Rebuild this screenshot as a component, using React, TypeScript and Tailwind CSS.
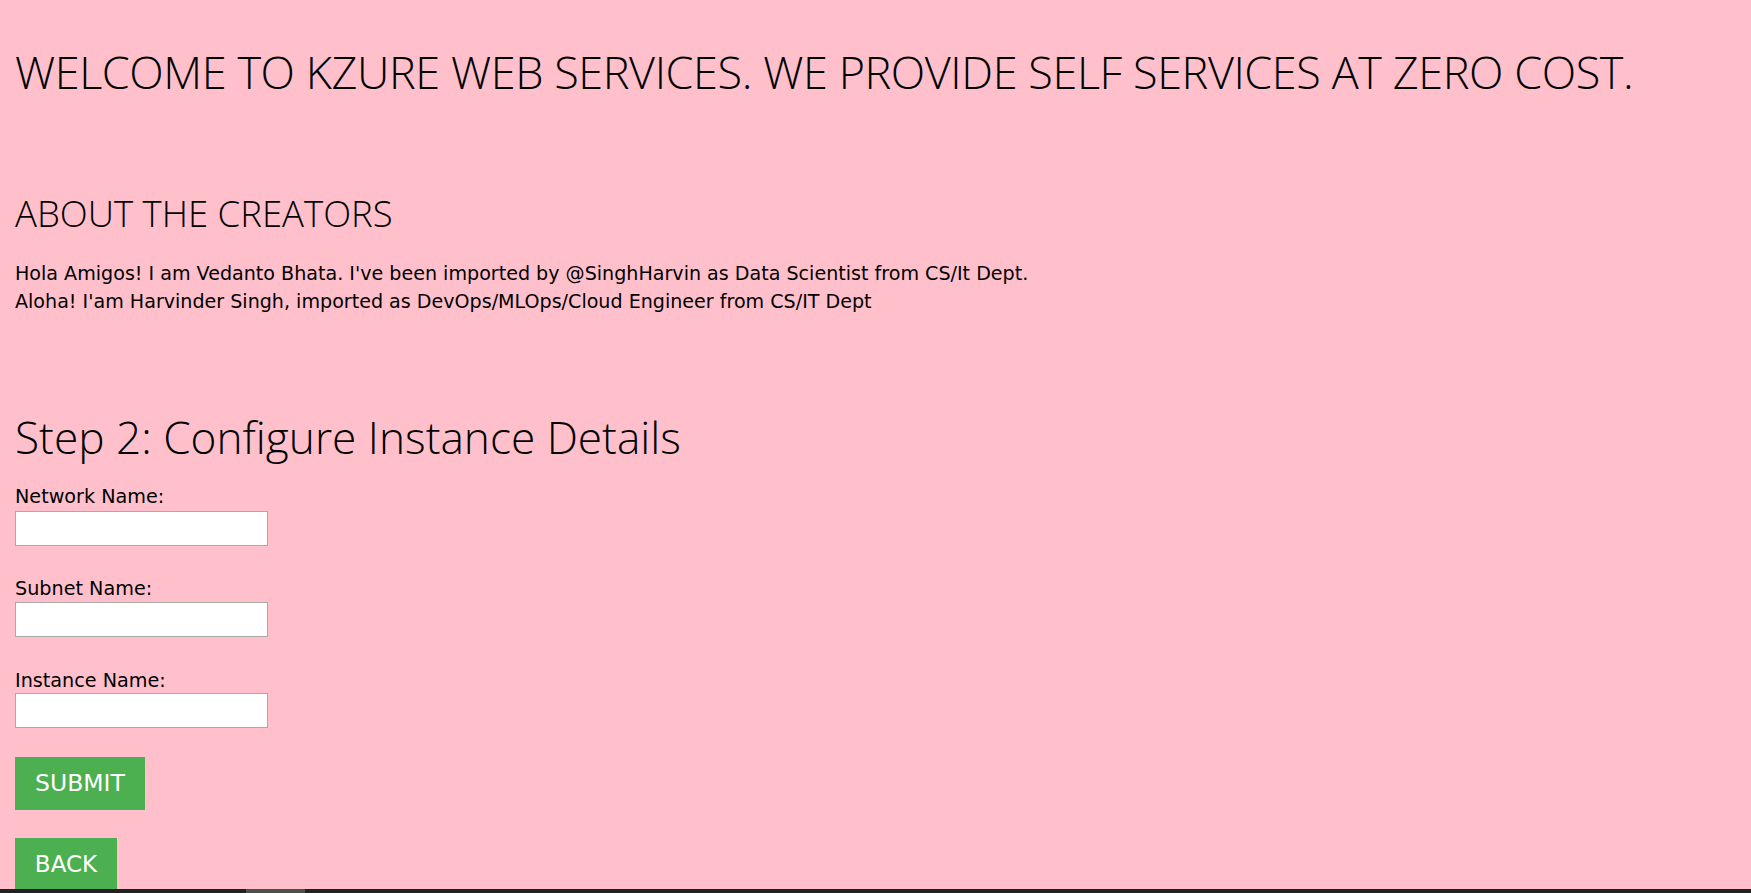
import React from "react";

const heading = { fontFamily: '"Open Sans", "Noto Sans", sans-serif' };
const body = { fontFamily: '"DejaVu Sans", Verdana, sans-serif' };

function Field({ label, labelMt, inputMt }: { label: string; labelMt: string; inputMt: string }) {
  return (
    <div className="flex flex-col items-start">
      <label className={`${labelMt} block text-[19.2px] leading-[22px] text-black`} style={body}>
        {label}
      </label>
      <input
        type="text"
        className={`${inputMt} block h-[35px] w-[253px] border border-[#a9a9a9] bg-white outline-none`}
      />
    </div>
  );
}

export default function App() {
  return (
    <div className="flex h-screen w-full flex-col overflow-hidden bg-[#ffc0cb]">
      <div className="flex-1 overflow-hidden pl-[15px]">
        <h1
          className="mt-[49px] whitespace-nowrap text-[45px] font-[350] leading-none tracking-[-0.42px] text-black"
          style={heading}
        >
          WELCOME TO KZURE WEB SERVICES. WE PROVIDE SELF SERVICES AT ZERO COST.
        </h1>
        <h2 className="mt-[101px] text-[36.5px] font-[350] leading-none text-black" style={heading}>
          ABOUT THE CREATORS
        </h2>
        <div className="mt-[28px] text-[19.1px] leading-[28px] text-black" style={body}>
          <p>Hola Amigos! I am Vedanto Bhata. I've been imported by @SinghHarvin as Data Scientist from CS/It Dept.</p>
          <p>Aloha! I'am Harvinder Singh, imported as DevOps/MLOps/Cloud Engineer from CS/IT Dept</p>
        </div>
        <h2 className="mt-[99px] text-[44.2px] font-[350] leading-none text-black" style={heading}>
          Step 2: Configure Instance Details
        </h2>
        <form className="flex flex-col items-start" onSubmit={(e) => e.preventDefault()}>
          <Field label="Network Name:" labelMt="mt-[27px]" inputMt="mt-[3px]" />
          <Field label="Subnet Name:" labelMt="mt-[32px]" inputMt="mt-[2px]" />
          <Field label="Instance Name:" labelMt="mt-[33px]" inputMt="mt-[1px]" />
          <button
            type="submit"
            className="mt-[29px] flex h-[53px] w-[130px] items-center justify-center bg-[#4caf50] text-[23.5px] text-white"
            style={body}
          >
            SUBMIT
          </button>
          <button
            type="button"
            className="mt-[28px] flex h-[53px] w-[102px] shrink-0 items-center justify-center bg-[#4caf50] text-[23px] text-white"
            style={body}
          >
            BACK
          </button>
        </form>
      </div>
      <div className="flex h-[4px] shrink-0 bg-[#202124]">
        <div className="ml-[246px] w-[59px] bg-[#4f4f4f]" />
      </div>
    </div>
  );
}
